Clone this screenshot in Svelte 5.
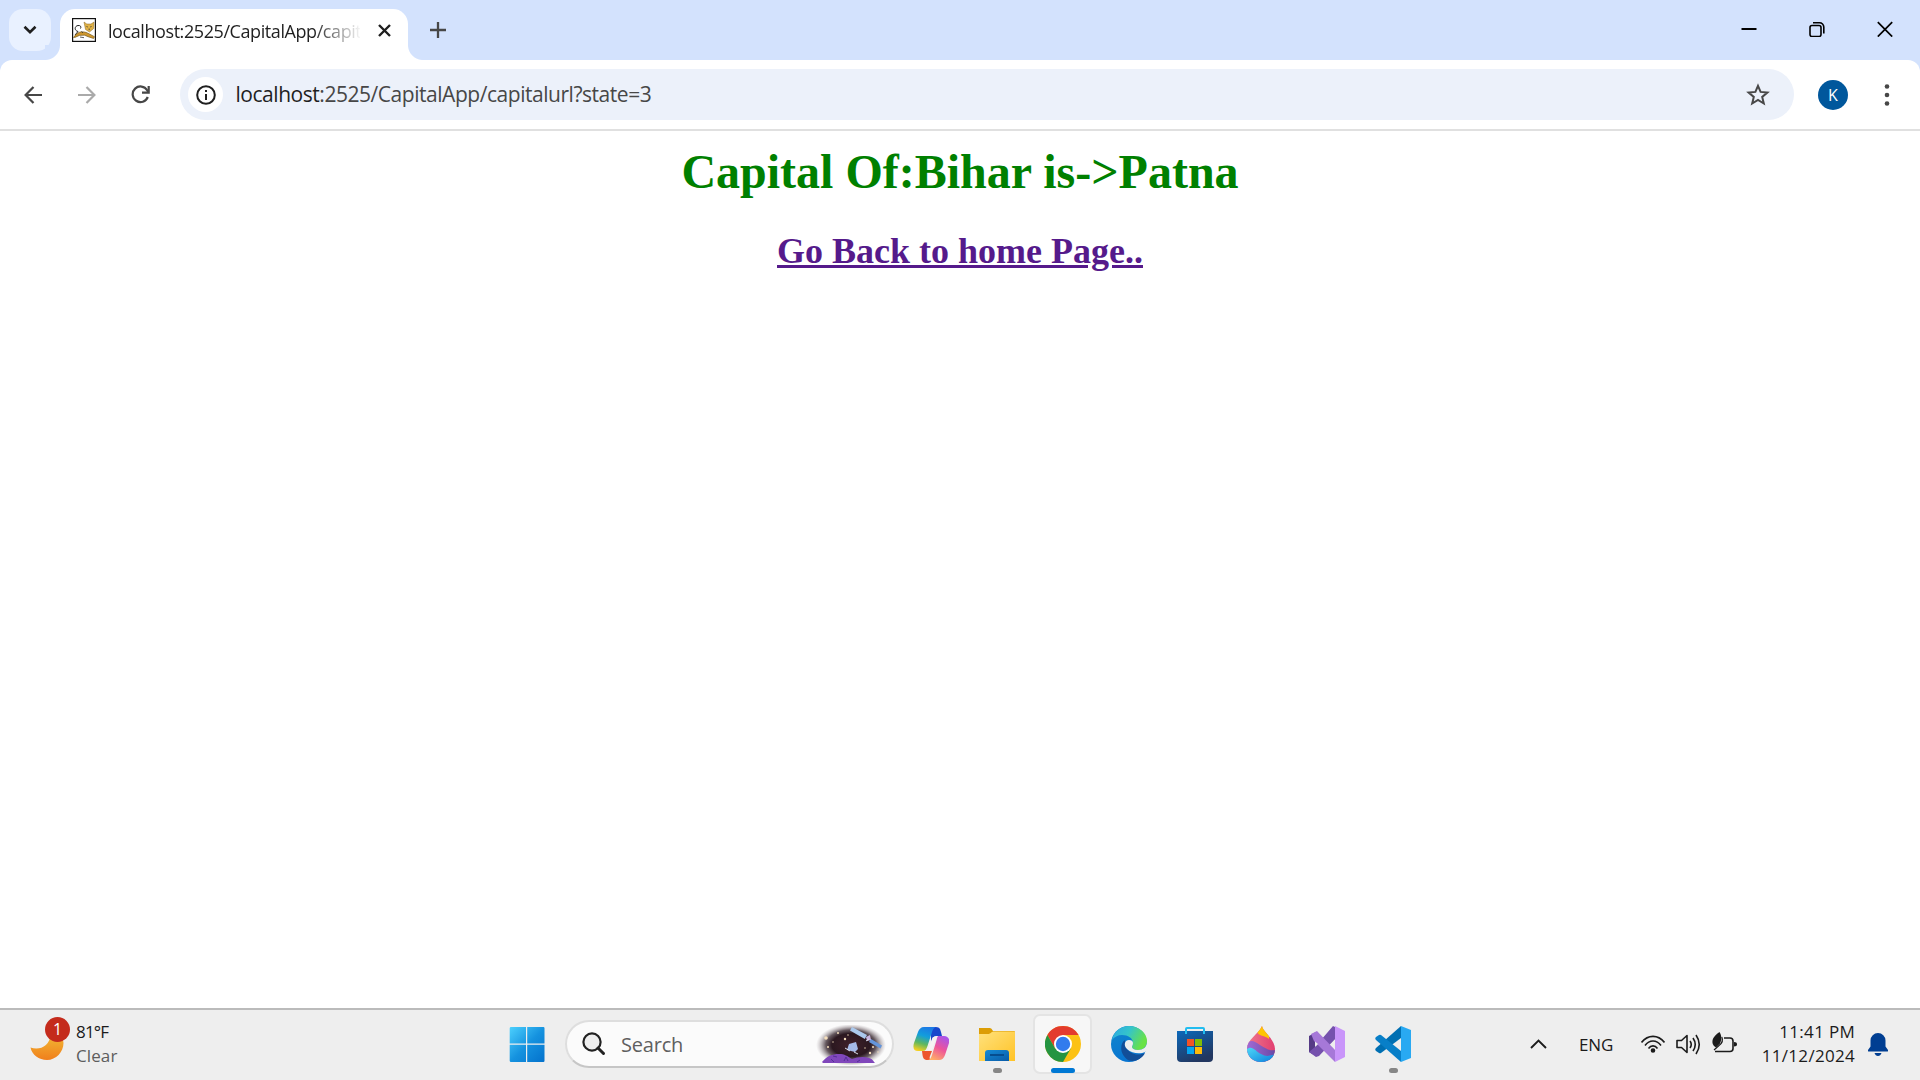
<script>
  const address = { host: 'localhost', rest: ':2525/CapitalApp/capitalurl?state=3' };
  const stars = [[10, 13, 1.8], [22, 8, 1], [29, 14, 1.2], [17, 17, .7], [12, 22, 1], [32, 10, .7], [49, 23, .7], [54, 28, 1.2], [57, 22, 1], [62, 27, .7]];
</script>

<div class="screen">
  <header class="tabstrip">
    <button class="tab-search" aria-label="Search tabs">
      <svg width="14" height="10" viewBox="0 0 14 10"><path d="M1.5 1.8 7 7.2l5.5-5.4" fill="none" stroke="#1f1f1f" stroke-width="2.6" /></svg>
    </button>
    <div class="tab">
      <svg class="favicon" width="24" height="24" viewBox="0 0 24 24">
        <rect x=".6" y=".6" width="22.8" height="22.8" fill="#fff" stroke="#111" stroke-width="1.2" />
        <path d="M6 13.500C2 12.500 2.500 8 6 7.500c2.500-.3 3.500 1.300 2.500 3M6 13.500l-3 3.500" fill="none" stroke="#222" stroke-width="1" />
        <path d="M1.500 19.500c2-3 5-5.700 8.500-5.700 3 0 5 .8 8 2.500l4.500 2.400-1 1.800-5.500-1.800-3.500-1.500-5 .2-4.500 2z" fill="#cf972e" stroke="#67501f" stroke-width=".6" />
        <path d="M12 4l2.800 2h4.200l3-2-.3 6.500-4.200 3.500-4-2.500z" fill="#dfb145" stroke="#8a6725" stroke-width=".5" />
        <path d="M14.500 8.500l1.300.5M19.500 8.500l-1.300.5M16.500 11.200h1.500" stroke="#333" stroke-width=".8" />
        <path d="M8 19l4 .7M9.500 13.500l1.500 1.500" stroke="#333" stroke-width=".8" />
      </svg>
      <span class="tab-title">localhost:2525/CapitalApp/capit</span>
      <svg class="tab-close" width="13" height="13" viewBox="0 0 13 13"><path d="M1 1l11 11M12 1 1 12" stroke="#1f1f1f" stroke-width="2.4" /></svg>
    </div>
    <svg class="new-tab" width="16" height="16" viewBox="0 0 16 16"><path d="M8 0v16M0 8h16" stroke="#474747" stroke-width="2.3" /></svg>
    <div class="window-controls">
      <svg width="16" height="16" viewBox="0 0 16 16"><path d="M.5 8h15" stroke="#000" stroke-width="2" /></svg>
      <svg width="16" height="16" viewBox="0 0 16 16" fill="none" stroke="#000" stroke-width="1.600"><rect x="1" y="4.500" width="11" height="11" rx="2" /><path d="M4 1.700h6.500a4.300 4.300 0 0 1 4.300 4.300v6.500" /></svg>
      <svg width="16" height="16" viewBox="0 0 16 16"><path d="M.8 1.200l14.400 14.400M15.200 1.200.8 15.600" stroke="#000" stroke-width="1.700" /></svg>
    </div>
  </header>

  <div class="toolbar-wrap">
    <nav class="toolbar">
      <svg width="18" height="18" viewBox="0 0 18 18" fill="none" stroke="#474747" stroke-width="2.200"><path d="M9.500 1 1.600 9l7.900 8M1.800 9H18" /></svg>
      <svg width="18" height="18" viewBox="0 0 18 18" fill="none" stroke="#aaa" stroke-width="2.200"><path d="M8.500 1l7.900 8-7.900 8M16.200 9H0" /></svg>
      <svg class="reload" width="19" height="19" viewBox="0 0 19 19" fill="none" stroke="#474747" stroke-width="2.200"><path d="M16.800 12A7.800 7.800 0 1 1 16.200 5.300L17.300 7" /><path d="M17.700 1v6.600H11" /></svg>
      <div class="omnibox">
        <span class="info"><svg width="20" height="20" viewBox="0 0 20 20"><circle cx="10" cy="10" r="8.800" fill="none" stroke="#1f1f1f" stroke-width="2" /><path d="M10 9v6M10 5v2" stroke="#1f1f1f" stroke-width="2" /></svg></span>
        <span class="url"><b>{address.host}</b>{address.rest}</span>
        <svg class="bookmark" width="24" height="24" viewBox="0 0 24 24"><path d="M12 2.800l2.600 6.100 6.800.6-5.200 4.400 1.600 6.600-5.800-3.500-5.800 3.500 1.600-6.600-5.200-4.400 6.800-.6z" fill="none" stroke="#474747" stroke-width="2" /></svg>
      </div>
      <span class="avatar">K</span>
      <svg class="more" width="6" height="22" viewBox="0 0 6 22" fill="#474747"><circle cx="3" cy="2.500" r="2.300" /><circle cx="3" cy="11" r="2.300" /><circle cx="3" cy="19.500" r="2.300" /></svg>
    </nav>
  </div>

  <main>
    <h1>Capital Of:Bihar is-&gt;Patna</h1>
    <h2><a href="#home">Go Back to home Page..</a></h2>
  </main>

  <footer class="taskbar">
    <div class="weather">
      <div class="moon">
        <svg width="34" height="34" viewBox="0 0 34 34"><defs><linearGradient id="moon" x2="0" y2="1"><stop stop-color="#f2ba35" /><stop offset="1" stop-color="#f07f1c" /></linearGradient></defs><path d="M.5 20.500C9 23.500 20 20 20.500 7 29 8 33.500 11 33.500 16c0 9-7.500 17-16.500 17C9 33 2 28 .5 20.500z" fill="url(#moon)" /></svg>
        <span class="badge">1</span>
      </div>
      <div class="two-lines"><span class="temp">81°F</span><span class="sky">Clear</span></div>
    </div>

    <div class="dock">
      <div class="slot">
        <svg width="36" height="36" viewBox="0 0 36 36"><defs><linearGradient id="win" gradientUnits="userSpaceOnUse" x1="0" y1="0" x2="36" y2="36"><stop stop-color="#4fd3ff" /><stop offset=".52" stop-color="#1592df" /><stop offset="1" stop-color="#0371cc" /></linearGradient></defs><path d="M2 1h15v16.500H.7V2.300Q.7 1 2 1zM18.200 1h16.200q1.100 0 1.100 1.300v15.200H18.200zM.7 18.700H17V36H2Q.7 36 .7 34.700zM18.200 18.700h17.300v16q0 1.300-1.100 1.300H18.200z" fill="url(#win)" /></svg>
      </div>
      <div class="search">
        <svg class="lens" width="24" height="24" viewBox="0 0 24 24"><circle cx="10" cy="10" r="8.600" fill="#eee" stroke="#222" stroke-width="2.200" /><path d="M16 16l5.500 5.500" stroke="#222" stroke-width="3" stroke-linecap="round" /></svg>
        <span>Search</span>
        <svg class="space" width="70" height="40" viewBox="0 0 70 40">
          <defs><radialGradient id="night"><stop stop-color="#40202a" /><stop offset=".55" stop-color="#2b1820" /><stop offset=".72" stop-color="#4a3b42" stop-opacity=".85" /><stop offset="1" stop-color="#a59ba0" stop-opacity="0" /></radialGradient></defs>
          <ellipse cx="35" cy="20" rx="35" ry="21" fill="url(#night)" />
          {#each stars as [x, y, r]}<circle cx={x} cy={y} r={r} fill="#f5dfbd" />{/each}
          <path d="M36 2l15 8-2.200 4L34 5.500z" fill="#abc9ed" /><path d="M55 14l11 6.500-1.500 3L53 17z" fill="#6495da" />
          <path d="M50 12l4-2 1 5-4 1z" fill="#c8b4df" /><path d="M33 19l7-2 2 7-3 3-8-2z" fill="#a5bae9" /><path d="M29 23l5 3M38 27l4 2M50 16l3-2" stroke="#d7dceb" />
          <path d="M6 37c5-6 10-8 17-8 6 0 8 2 13 5 5-2 12-3 17-1 4 1 4 3 6 5H7z" fill="#8047bb" /><path d="M15 34l3 3m-1-6l4 1m7 4l2-4 2 4m9 1l3-2" stroke="#533096" fill="none" />
        </svg>
      </div>
      <div class="slot first">
        <svg width="36" height="36" viewBox="0 0 36 36"><defs><linearGradient id="cpa" x1=".6" x2=".3" y2="1"><stop stop-color="#1c78e5" /><stop offset=".38" stop-color="#129edc" /><stop offset=".7" stop-color="#5fb75f" /><stop offset="1" stop-color="#f3cf20" /></linearGradient><linearGradient id="cpb" x1=".8" x2=".3" y2="1"><stop stop-color="#a655ee" /><stop offset=".5" stop-color="#ed549a" /><stop offset="1" stop-color="#ffaf66" /></linearGradient></defs>
          <path d="M18 1h5c4 0 4.500 3 5 5l1 4h-5c-4 0-5 3-6 7z" fill="#1647cc" /><path d="M9 25h10l-2 5c-1 3 0 4 3 4h-5c-4 0-5-2-5.500-5z" fill="#ed542d" />
          <path d="M11 1h13c-3 0-4 2-5 5l-4.500 14c-1 3-2 5-5 5H5c-4 0-5.500-3-4-8L5 6c1-3 3-5 6-5z" fill="url(#cpa)" /><path d="M25 10h6c4 0 6 3 5 7l-4 12c-1 3-3 5-6 5H14c3 0 4-2 5-5l4-13c1-3 1-5 2-6z" fill="url(#cpb)" /><path d="M19.500 11.500q1.500-1.500 5-1.500-1.500 1.500-2.500 5L19 24H15z" fill="#f6f2f3" /></svg>
      </div>
      <div class="slot running">
        <svg width="36" height="36" viewBox="0 0 36 36"><defs><linearGradient id="fld" x2="1" y2="1"><stop stop-color="#ffe17d" /><stop offset="1" stop-color="#ffc326" /></linearGradient><linearGradient id="fb" x2="1" y2="1"><stop stop-color="#158bd6" /><stop offset="1" stop-color="#095ba8" /></linearGradient></defs><path d="M0 2h11q1.500 0 3 3h21q1 0 1 1v8H0z" fill="#dc9d05" /><path d="M0 8h9c3 0 3-2.500 6-2.500h21V35H0z" fill="url(#fld)" /><path d="M6 35V27q0-3 3-3h18q3 0 3 3v8z" fill="url(#fb)" /><path d="M11 29h14" stroke="#064d8f" stroke-width="2" /></svg>
      </div>
      <div class="slot active">
        <svg width="36" height="36" viewBox="0 0 36 36"><circle cx="18" cy="18" r="18" fill="#fcc214" /><path d="M18 0C11 0 5.500 3.400 2.400 9L10.200 22.500 18 9h15.600A18 18 0 0 0 18 0z" fill="#e33b2e" /><path d="M2.400 9a18 18 0 0 0 15.600 27l7.800-13.500H10.200z" fill="#259442" /><circle cx="18" cy="18" r="9" fill="#fff" /><circle cx="18" cy="18" r="7.200" fill="#327bed" /></svg>
      </div>
      <div class="slot">
        <svg width="36" height="36" viewBox="0 0 36 36"><defs><linearGradient id="ea" x2="1" y2=".4"><stop stop-color="#2aa7e5" /><stop offset=".5" stop-color="#35c4ca" /><stop offset="1" stop-color="#68e246" /></linearGradient><linearGradient id="eb" x2=".4" y2="1"><stop stop-color="#1187cc" /><stop offset="1" stop-color="#0874d1" /></linearGradient></defs>
          <circle cx="18" cy="18" r="18" fill="url(#eb)" /><path d="M1 14C3 5 10 0 18 0c10 0 18 7 18 15 0 6-4 9-9 9-4 0-6-1.500-6-3 0-1 1-1.500 1-4 0-5-5-8-11-8C7 9 3 11 1 14z" fill="url(#ea)" /><path d="M14 14c-5 3-6 14 3 20 6 3 14-1 17-7-8 4-21 0-20-13z" fill="#124e98" /><path d="M18 14c-4 0-6 5-2 9 5 5 14 5 18 3q1.500-.5 2-3v-7c0 5-4 8-9 8-4 0-6-1.500-6-3 0-1 1-1.500 1-4 0-2-1.500-3-4-3z" fill="#eee" /></svg>
      </div>
      <div class="slot">
        <svg width="36" height="36" viewBox="0 0 36 36"><defs><linearGradient id="st" x2=".5" y2="1"><stop stop-color="#0c69bb" /><stop offset="1" stop-color="#223760" /></linearGradient></defs><path d="M0 5h36v27q0 4-4 4H4q-4 0-4-4z" fill="url(#st)" /><path d="M9 8V3q0-1 1-1h16q1 0 1 1v5" fill="none" stroke="#22bdf0" stroke-width="2" /><path d="M10 13h7v7h-7z" fill="#f35325" /><path d="M18 13h7v7h-7z" fill="#81bc06" /><path d="M10 21h7v7h-7z" fill="#05a6f0" /><path d="M18 21h7v7h-7z" fill="#ffba08" /></svg>
      </div>
      <div class="slot">
        <svg width="36" height="36" viewBox="0 0 36 36"><defs><clipPath id="drop"><path d="M19 0c1 6 13 13 13 23 0 8-6 13-14 13S4 30 4 23C4 13 15 9 19 0z" /></clipPath><linearGradient id="pp" x2="1"><stop stop-color="#a46bd6" /><stop offset="1" stop-color="#6849a6" /></linearGradient><linearGradient id="pk" x2="1"><stop stop-color="#f08090" /><stop offset="1" stop-color="#e0366c" /></linearGradient><linearGradient id="pb" x2="1" y2="1"><stop stop-color="#4fdaf7" /><stop offset="1" stop-color="#087bdc" /></linearGradient></defs><g clip-path="url(#drop)"><path d="M0 0h36v36H0z" fill="url(#pk)" /><path d="M14 5c1 6 8 4 12 8V0H14z" fill="#fec404" /><path d="M3 19c4-7 9-3 14 0 7 4 9 6 15 5v12H3z" fill="url(#pp)" /><path d="M3 24c6-6 9 1 15 4 5 3 9 2 14 0v9H3z" fill="url(#pb)" /></g></svg>
      </div>
      <div class="slot">
        <svg width="36" height="36" viewBox="0 0 36 36"><path d="M0 10l7-4v24l-7-4z" fill="#553b86" /><path d="M0 26l6-5L24 0l4 2v9L10 30l-3 1z" fill="#7551ad" /><path d="M2 8l6-3 18 19v12L5 15z" fill="#a678d8" /><path d="M26 0l10 5v26l-10 5z" fill="#c995fa" /><path d="M6 15.500l3 2.500-3 3z" fill="#eee" /></svg>
      </div>
      <div class="slot running">
        <svg width="36" height="36" viewBox="0 0 36 36"><path d="M1 22L26 0v12L6 27q-1 .5-2 0l-3-2q-1.500-1.500 0-3z" fill="#006fb2" /><path d="M1 14q-1.500-1.500 0-3l3-2q1-.5 2 0l20 16v11z" fill="#087fc8" /><path d="M26 0l10 4v28l-10 4z" fill="#29a9f2" /></svg>
      </div>
    </div>

    <div class="tray">
      <svg class="chev" width="17" height="10" viewBox="0 0 17 10"><path d="M1 9l7.500-7.500L16 9" fill="none" stroke="#1b1b1b" stroke-width="1.900" /></svg>
      <span class="lang">ENG</span>
      <svg class="wifi" width="24" height="20" viewBox="0 0 24 20" fill="none" stroke="#1b1b1b" stroke-width="1.600"><path d="M.5 8.500C7 .3 17 .3 23.500 8.500M4 11.500c4.500-6 11.500-6 16 0M7.500 14.500c2.500-3.500 6.500-3.500 9 0" /><circle cx="12" cy="16.500" r="1.500" fill="#1b1b1b" /></svg>
      <svg class="sound" width="25" height="21" viewBox="0 0 25 21" fill="none" stroke="#1b1b1b" stroke-width="1.600" stroke-linejoin="round"><path d="M1 6.500h4.500L11 1.500v17l-5.500-5H1zM14 7q2.500 3.500 0 7M17 4q4.500 6.500 0 13M20 1q6.500 9.500 0 19" /></svg>
      <svg class="battery" width="25" height="21" viewBox="0 0 25 21"><path d="M12 6h6q3 0 3 3v7.500q0 3-3 3H3" fill="none" stroke="#1b1b1b" stroke-width="1.600" /><path d="M22 10q3 0 3 2.200t-3 2.200z" fill="#1b1b1b" /><path d="M7.500 0c2.500 4 2.500 9-.5 12.500l-3 3-2-1.500C-1 10 0 5 7.500 0z" fill="#1b1b1b" /><path d="M9.800 5q2.200 5-2.800 8.500L2 18" stroke="#1b1b1b" fill="none" stroke-width="1.200" /></svg>
      <div class="two-lines clock"><span>11:41 PM</span><span>11/12/2024</span></div>
      <svg class="bell" width="20" height="23" viewBox="0 0 20 23" fill="#003e92"><path d="M10 0a7.500 7.500 0 0 1 7.500 7.500v6L20 17q.5 1.500-1 1.500H1Q-.5 18.500 0 17l2.500-3.500v-6A7.500 7.500 0 0 1 10 0zM6.500 20h7q-1 3-3.500 3t-3.500-3z" /></svg>
    </div>
  </footer>
</div>

<style>
  :global(body) { margin: 0; overflow: hidden; }
  .screen { width: 1920px; height: 1080px; display: flex; flex-direction: column; background: #fff; font-family: "Open Sans", "Noto Sans", sans-serif; color: #1b1b1b; }
  svg { display: block; flex: none; }
  button { border: 0; padding: 0; }

  .tabstrip { height: 60px; flex: none; display: flex; align-items: center; background: #d3e2fd; padding-left: 9px; box-sizing: border-box; }
  .tab-search { width: 42px; height: 42px; border-radius: 14px; background: #e9f1ff; display: flex; align-items: center; justify-content: center; }
  .tab { position: relative; width: 348px; height: 51px; margin: 9px 0 0 9px; border-radius: 15px 15px 0 0; background: #fff; display: flex; align-items: flex-start; box-sizing: border-box; padding: 9px 0 0 12px; }
  .tab::before, .tab::after { content: ""; position: absolute; bottom: 0; width: 15px; height: 15px; }
  .tab::before { right: 100%; background: radial-gradient(circle at 0 0, #d3e2fd 14.500px, #fff 15.500px); }
  .tab::after { left: 100%; background: radial-gradient(circle at 100% 0, #d3e2fd 14.500px, #fff 15.500px); }
  .tab-title { margin-left: 12px; width: 252px; height: 26px; overflow: hidden; white-space: nowrap; font-size: 18px; line-height: 26px; letter-spacing: -.42px; color: #1f1f1f; mask-image: linear-gradient(90deg, #000 205px, transparent 254px); }
  .tab-close { margin: 6px 0 0 18px; }
  .new-tab { margin-left: 22px; }
  .window-controls { margin-left: auto; display: flex; gap: 52px; padding: 0 27px 2px 0; }

  .toolbar-wrap { flex: none; height: 69px; background: #d3e2fd; border-bottom: 2px solid #e0e0e0; }
  .toolbar { height: 69px; border-radius: 12px 12px 0 0; background: #fff; box-sizing: border-box; padding-left: 24px; display: grid; grid-template-columns: 54px 53px 49px 1614px 54px 42px; align-items: center; }
  .omnibox { height: 51px; border-radius: 26px; background: #ecf1fa; display: flex; align-items: center; padding: 0 24px 0 8px; box-sizing: border-box; }
  .info { width: 35px; height: 35px; border-radius: 50%; background: #fff; display: flex; align-items: center; justify-content: center; }
  .url { margin: 0 0 1px 12.500px; font-size: 21px; line-height: 28px; color: #474747; letter-spacing: -.46px; white-space: nowrap; }
  .url b { font-weight: 400; color: #1f1f1f; }
  .bookmark { margin-left: auto; }
  .avatar { justify-self: end; width: 30px; height: 30px; border-radius: 50%; background: #00579c; color: #fff; text-align: center; font-size: 16px; line-height: 30px; }
  .more { justify-self: end; }

  main { flex: 1; text-align: center; font-family: "Liberation Serif", serif; }
  h1 { margin: 13px 0 0; font-size: 48px; line-height: 55px; color: #008000; }
  h2 { margin: 32px 0 0; font-size: 36px; line-height: 41px; }
  a { color: #551a8b; text-decoration: underline; }

  .taskbar { flex: none; height: 72px; box-sizing: border-box; border-top: 2px solid #bbb; background: #eee; display: grid; grid-template-columns: 494px 932px 494px; }
  .weather, .tray, .dock { height: 68px; display: flex; align-items: center; }
  .two-lines { display: flex; flex-direction: column; font-size: 17px; line-height: 24px; white-space: nowrap; }
  .weather { padding-left: 30px; }
  .moon { position: relative; width: 34px; margin-right: 12px; }
  .badge { position: absolute; left: 15px; top: -10px; width: 25px; height: 25px; border-radius: 50%; background: #c42b1c; color: #fff; font-size: 16px; line-height: 24px; text-align: center; }
  .temp { letter-spacing: -.8px; }
  .sky { color: #5d5d5d; letter-spacing: .1px; }

  .slot { position: relative; width: 66px; height: 68px; display: flex; align-items: center; justify-content: center; flex: none; }
  .first { margin-left: 4px; }
  .running::after { content: ""; position: absolute; left: 29px; top: 58px; width: 9px; height: 5px; border-radius: 3px; background: #868686; }
  .active::before { content: ""; position: absolute; left: 3px; top: 4px; width: 55px; height: 56px; border: 2px solid #e4e4e4; border-radius: 7px; background: #f7f7f7; }
  .active svg { position: relative; }
  .active::after { content: ""; position: absolute; left: 21px; top: 58px; width: 24px; height: 5px; border-radius: 3px; background: #0078d4; }
  .search { margin-left: 5px; width: 329px; height: 48px; box-sizing: border-box; border: 2px solid #dedede; border-bottom-color: #c6c6c6; border-radius: 24px; background: #fbfbfb; display: flex; align-items: center; padding: 0 6px 0 15px; flex: none; }
  .search span { margin: 2px 0 0 15px; font-size: 20px; line-height: 28px; color: #5f5f5f; letter-spacing: -.2px; }
  .space { margin: 2px 0 0 auto; }

  .tray { padding-left: 104px; }
  .lang { margin-left: 32px; width: 34px; font-size: 17px; letter-spacing: -.1px; }
  .wifi { margin-left: 28px; }
  .sound { margin: 0 11px; }
  .battery { margin-bottom: 3px; }
  .clock { width: 118px; text-align: right; letter-spacing: .3px; }
  .bell { margin-left: 13px; }
</style>
